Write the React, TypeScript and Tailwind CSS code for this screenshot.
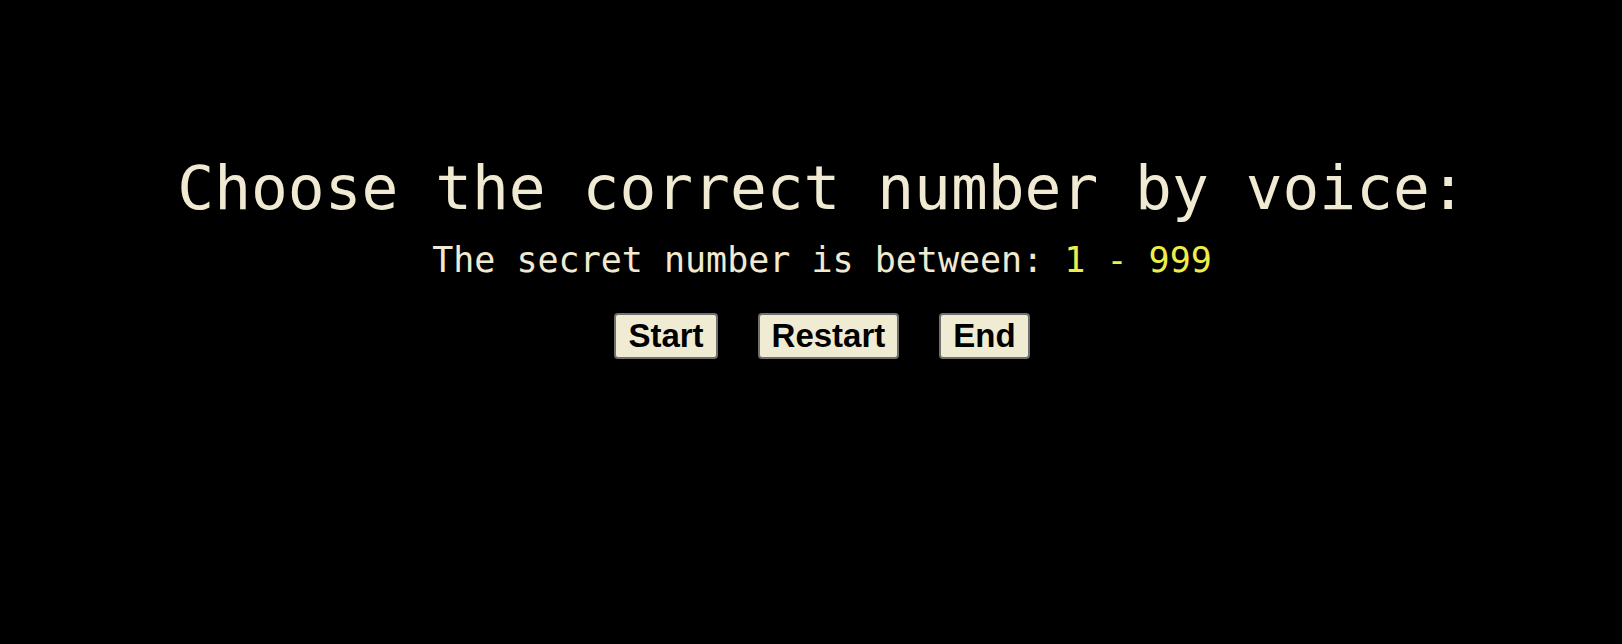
import React from "react";

export default function App() {
  const mono = { fontFamily: '"DejaVu Sans Mono", "Liberation Mono", monospace' };
  return (
    <div className="min-h-[644px] w-full bg-black pl-[22px] pt-[157px] text-[#f0ead2]">
      <div className="flex flex-col items-center">
        <h1
          className="text-[61.2px] leading-none font-normal whitespace-pre"
          style={mono}
        >
          Choose the correct number by voice:
        </h1>
        <p
          className="mt-[25px] text-[35px] leading-none whitespace-pre"
          style={mono}
        >
          The secret number is between: <span className="text-[#eeee4a]">1 - 999</span>
        </p>
        <div className="mt-[35px] flex gap-[40px] font-['Liberation_Sans',Arial,sans-serif]">
          {["Start", "Restart", "End"].map((t) => (
            <button
              key={t}
              className="rounded-[4px] border-2 border-[#707070] bg-[#f0ebd3] px-[12px] py-[2px] text-[33px] font-bold text-black"
              style={{ lineHeight: "normal" }}
            >
              {t}
            </button>
          ))}
        </div>
      </div>
    </div>
  );
}
